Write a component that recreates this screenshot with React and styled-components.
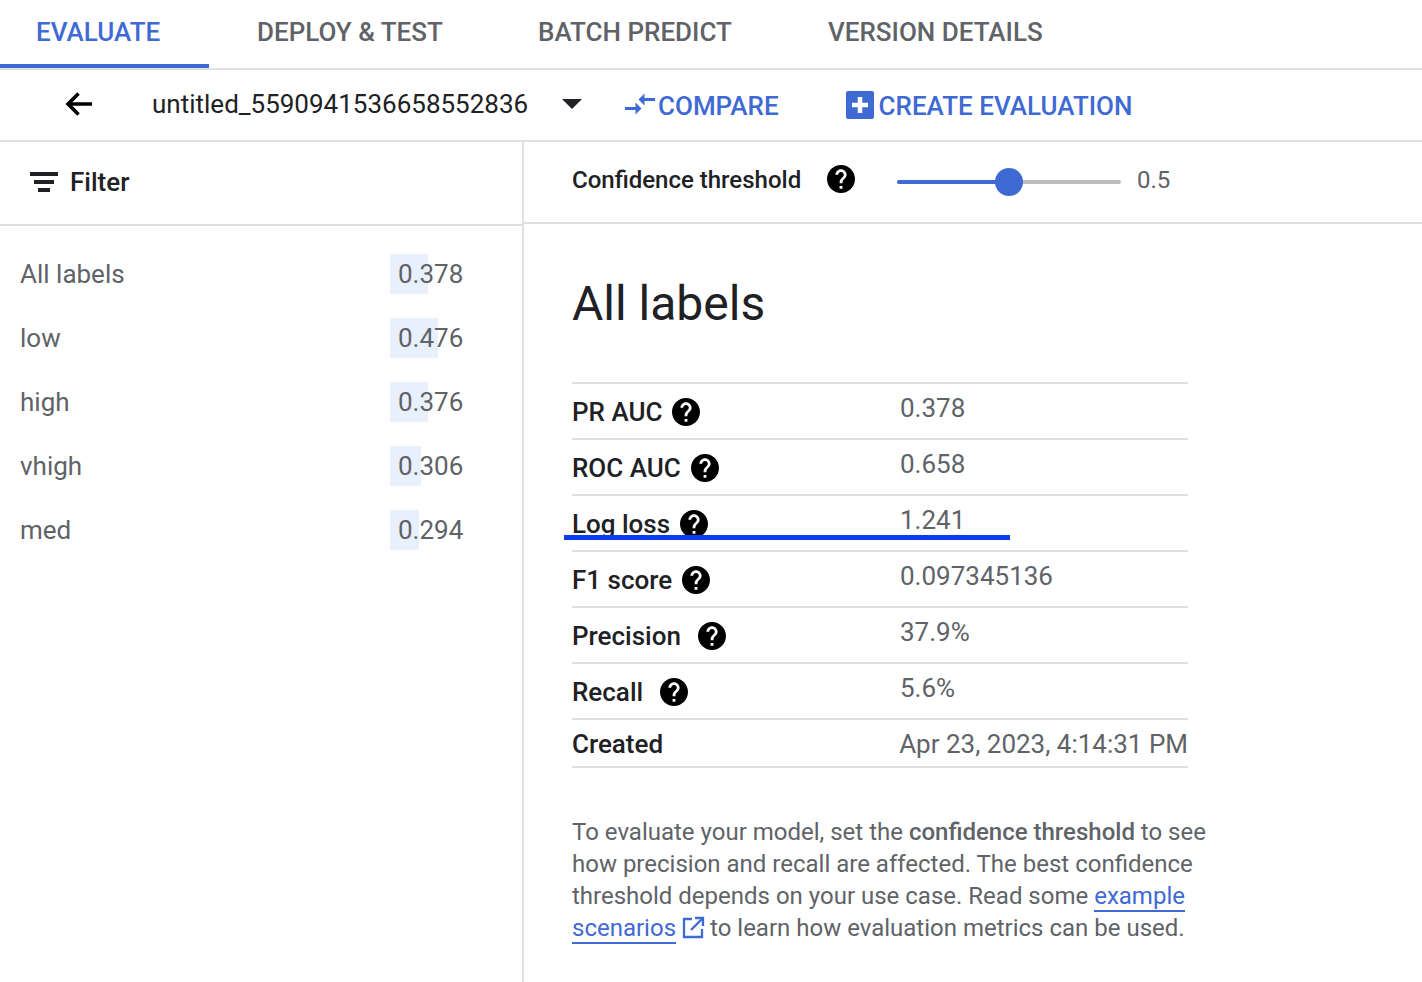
import React from 'react';
import styled, { createGlobalStyle } from 'styled-components';

const BLUE = '#3f69d3';
const LINE = '#e0e0e0';
const GRAY = '#5f6368';

const GlobalStyle = createGlobalStyle`
  html, body {
    margin: 0;
    padding: 0;
    background: #fff;
    overflow: hidden;
  }
  body {
    font-family: Roboto, "Liberation Sans", sans-serif;
  }
`;

const Page = styled.div`
  position: relative;
  width: 1422px;
  height: 982px;
  overflow: hidden;
`;

const Tabs = styled.div`
  display: flex;
  height: 68px;
  border-bottom: 2px solid ${LINE};
`;

const Tab = styled.div`
  box-sizing: border-box;
  width: ${(p) => p.$width}px;
  height: 68px;
  padding: 14px 0 0 ${(p) => p.$pad}px;
  font-size: 26px;
  line-height: 36px;
  font-weight: 500;
  white-space: nowrap;
  color: ${(p) => (p.$active ? BLUE : GRAY)};
  border-bottom: ${(p) => (p.$active ? `4px solid ${BLUE}` : 'none')};
`;

const SubBar = styled.div`
  display: flex;
  align-items: center;
  height: 70px;
  border-bottom: 2px solid ${LINE};
`;

const BackIcon = styled.svg`
  width: 32px;
  height: 32px;
  margin-left: 63px;
`;

const ModelName = styled.div`
  margin: -2px 0 0 57px;
  width: 410px;
  font-size: 26px;
  color: #202124;
  white-space: nowrap;
`;

const Caret = styled.div`
  width: 0;
  height: 0;
  border-left: 10px solid transparent;
  border-right: 10px solid transparent;
  border-top: 10px solid #202124;
  margin-top: -3px;
`;

const ActionLink = styled.div`
  display: flex;
  align-items: center;
  margin-left: ${(p) => p.$left}px;
  padding-top: 2px;
  font-size: 26px;
  font-weight: 500;
  color: ${BLUE};
  white-space: nowrap;
`;

const CompareIcon = styled.svg`
  width: 36px;
  height: 36px;
  margin-bottom: 5px;
  fill: ${BLUE};
`;

const AddIcon = styled.svg`
  width: 28px;
  height: 28px;
  margin: -2px 5px 0 0;
`;

const Body = styled.div`
  display: flex;
  height: 840px;
`;

const Sidebar = styled.aside`
  width: 522px;
  flex: none;
  border-right: 2px solid ${LINE};
`;

const FilterBar = styled.div`
  display: flex;
  align-items: center;
  box-sizing: border-box;
  height: 84px;
  padding: 0 0 2px 28px;
  border-bottom: 2px solid ${LINE};
  font-size: 26px;
  font-weight: 500;
  color: #202124;
`;

const FilterIcon = styled.svg`
  width: 32px;
  height: 24px;
  margin-right: 10px;
  fill: #202124;
`;

const LabelList = styled.div`
  padding-top: 28px;
`;

const LabelRow = styled.div`
  display: flex;
  align-items: center;
  height: 40px;
  margin-bottom: 24px;
  padding-left: 20px;
  font-size: 26px;
  color: ${GRAY};
`;

const LabelName = styled.div`
  width: 370px;
`;

const Score = styled.div`
  position: relative;
  width: 100px;
  height: 40px;
  padding-left: 8px;
  line-height: 40px;
`;

const ScoreBar = styled.div`
  position: absolute;
  left: 0;
  top: 0;
  height: 100%;
  background: #e8f0fe;
`;

const ScoreText = styled.span`
  position: relative;
`;

const Main = styled.main`
  flex: 1;
`;

const ThresholdBar = styled.div`
  display: flex;
  align-items: center;
  box-sizing: border-box;
  height: 82px;
  padding: 0 0 4px 48px;
  border-bottom: 2px solid ${LINE};
  font-size: 24px;
  color: #202124;
`;

const ThresholdLabel = styled.div`
  font-weight: 500;
  width: 255px;
  white-space: nowrap;
`;

const Track = styled.div`
  position: relative;
  width: 224px;
  height: 4px;
  margin: 4px 0 0 42px;
  border-radius: 2px;
  background: #bdbdbd;
`;

const TrackFill = styled.div`
  height: 100%;
  width: 50%;
  border-radius: 2px;
  background: ${BLUE};
`;

const Thumb = styled.div`
  position: absolute;
  left: 98px;
  top: -12px;
  width: 28px;
  height: 28px;
  border-radius: 50%;
  background: ${BLUE};
`;

const ThresholdValue = styled.div`
  margin-left: 16px;
  color: ${GRAY};
`;

const Content = styled.div`
  width: 640px;
  padding-left: 48px;
`;

const Title = styled.h1`
  margin: 0;
  padding-top: 50px;
  height: 108px;
  font-size: 48px;
  line-height: 60px;
  font-weight: 400;
  color: #202124;
`;

const Metrics = styled.div`
  width: 616px;
  border-top: 2px solid ${LINE};
`;

const MetricRow = styled.div`
  display: flex;
  box-sizing: border-box;
  height: ${(p) => (p.$last ? 48 : 56)}px;
  border-bottom: 2px solid ${LINE};
`;

const MetricName = styled.div`
  display: flex;
  align-items: center;
  width: 328px;
  height: 100%;
  padding-top: 2px;
  box-sizing: border-box;
  font-size: 26px;
  font-weight: 500;
  color: #202124;
  white-space: nowrap;
`;

const MetricValue = styled.div`
  font-size: 26px;
  line-height: 46px;
  margin-top: 1px;
  color: ${GRAY};
  white-space: nowrap;
`;

const HelpIcon = styled.svg`
  width: 28px;
  height: 28px;
  flex: none;
  margin-left: ${(p) => p.$left}px;
  margin-top: ${(p) => p.$top}px;
`;

const Paragraph = styled.p`
  margin: 48px 0 0;
  width: 650px;
  font-size: 24px;
  line-height: 32px;
  color: ${GRAY};
  white-space: nowrap;
  b {
    font-weight: 500;
  }
`;

const DocLink = styled.span`
  color: ${BLUE};
  border-bottom: 2px solid ${BLUE};
`;

const ExternalIcon = styled.svg`
  width: 24px;
  height: 24px;
  margin: 0 5px;
  vertical-align: -4px;
`;

// stray annotation line that sits across the Log loss row
const Overlay = styled.div`
  position: absolute;
  left: 564px;
  top: 535px;
  width: 446px;
  height: 5px;
  background: #0a3cf0;
`;

function Help({ left = 10, top = 0 }) {
  return (
    <HelpIcon viewBox="2 2 20 20" $left={left} $top={top}>
      <path d="M12 2C6.48 2 2 6.48 2 12s4.48 10 10 10 10-4.48 10-10S17.52 2 12 2zm1 17h-2v-2h2v2zm2.07-7.75l-.9.92C13.45 12.9 13 13.5 13 15h-2v-.5c0-1.1.45-2.1 1.17-2.83l1.24-1.26c.37-.36.59-.86.59-1.41 0-1.1-.9-2-2-2s-2 .9-2 2H8c0-2.21 1.79-4 4-4s4 1.79 4 4c0 .88-.36 1.68-.93 2.25z" />
    </HelpIcon>
  );
}

const labels = [
  { name: 'All labels', value: '0.378', bar: 38 },
  { name: 'low', value: '0.476', bar: 48 },
  { name: 'high', value: '0.376', bar: 38 },
  { name: 'vhigh', value: '0.306', bar: 31 },
  { name: 'med', value: '0.294', bar: 29 },
];

const metrics = [
  { name: 'PR AUC', value: '0.378', left: 10 },
  { name: 'ROC AUC', value: '0.658', left: 10 },
  { name: 'Log loss', value: '1.241', left: 10 },
  { name: 'F1 score', value: '0.097345136', left: 10 },
  { name: 'Precision', value: '37.9%', left: 17 },
  { name: 'Recall', value: '5.6%', left: 17 },
];

export default function App() {
  return (
    <Page>
      <GlobalStyle />
      <Tabs>
        <Tab $active $width={209} $pad={36}>EVALUATE</Tab>
        <Tab $width={281} $pad={48}>DEPLOY &amp; TEST</Tab>
        <Tab $width={290} $pad={48}>BATCH PREDICT</Tab>
        <Tab $width={300} $pad={48}>VERSION DETAILS</Tab>
      </Tabs>
      <SubBar>
        <BackIcon viewBox="0 0 32 32">
          <path d="M29 15H6M15.500 4.500 5 15l10.500 10.500" fill="none" stroke="#000" strokeWidth="3.6" />
        </BackIcon>
        <ModelName>untitled_5590941536658552836</ModelName>
        <Caret />
        <ActionLink $left={40}>
          <CompareIcon viewBox="0 0 24 24">
            <path d="M9.01 14H2v2h7.01v3L13 15l-3.99-4v3zm5.98-1v-3H22V8h-7.01V5L11 9l3.99 4z" />
          </CompareIcon>
          COMPARE
        </ActionLink>
        <ActionLink $left={67}>
          <AddIcon viewBox="0 0 28 28">
            <rect width="28" height="28" rx="2" fill={BLUE} />
            <path d="M14 6v16M6 14h16" stroke="#fff" strokeWidth="4.5" />
          </AddIcon>
          CREATE EVALUATION
        </ActionLink>
      </SubBar>
      <Body>
        <Sidebar>
          <FilterBar>
            <FilterIcon viewBox="0 0 32 24">
              <path d="M2 2h28v4H2zM6 10h20v4H6zM10 18h12v4H10z" />
            </FilterIcon>
            Filter
          </FilterBar>
          <LabelList>
            {labels.map((l) => (
              <LabelRow key={l.name}>
                <LabelName>{l.name}</LabelName>
                <Score>
                  <ScoreBar style={{ width: l.bar }} />
                  <ScoreText>{l.value}</ScoreText>
                </Score>
              </LabelRow>
            ))}
          </LabelList>
        </Sidebar>
        <Main>
          <ThresholdBar>
            <ThresholdLabel>Confidence threshold</ThresholdLabel>
            <Help left={0} top={-2} />
            <Track>
              <TrackFill />
              <Thumb />
            </Track>
            <ThresholdValue>0.5</ThresholdValue>
          </ThresholdBar>
          <Content>
            <Title>All labels</Title>
            <Metrics>
              {metrics.map((m) => (
                <MetricRow key={m.name}>
                  <MetricName>
                    {m.name}
                    <Help left={m.left} />
                  </MetricName>
                  <MetricValue>{m.value}</MetricValue>
                </MetricRow>
              ))}
              <MetricRow $last>
                <MetricName>Created</MetricName>
                <MetricValue>Apr 23, 2023, 4:14:31 PM</MetricValue>
              </MetricRow>
            </Metrics>
            <Paragraph>
              To evaluate your model, set the <b>confidence threshold</b> to see
              <br />
              how precision and recall are affected. The best confidence
              <br />
              threshold depends on your use case. Read some <DocLink>example</DocLink>
              <br />
              <DocLink>scenarios</DocLink>
              <ExternalIcon viewBox="0 0 24 24">
                <path d="M11 3H3v18h18v-8M14 2h8v8M22 2 10 14" fill="none" stroke={BLUE} strokeWidth="2.3" />
              </ExternalIcon>
              to learn how evaluation metrics can be used.
            </Paragraph>
          </Content>
        </Main>
      </Body>
      <Overlay />
    </Page>
  );
}
